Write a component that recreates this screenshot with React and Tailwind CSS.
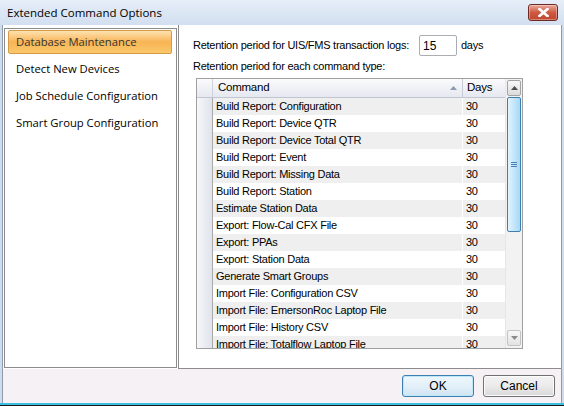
import React from "react";

const rows = [
  "Build Report: Configuration",
  "Build Report: Device QTR",
  "Build Report: Device Total QTR",
  "Build Report: Event",
  "Build Report: Missing Data",
  "Build Report: Station",
  "Estimate Station Data",
  "Export: Flow-Cal CFX File",
  "Export: PPAs",
  "Export: Station Data",
  "Generate Smart Groups",
  "Import File: Configuration CSV",
  "Import File: EmersonRoc Laptop File",
  "Import File: History CSV",
  "Import File: Totalflow Laptop File",
];

const menu = [
  "Database Maintenance",
  "Detect New Devices",
  "Job Schedule Configuration",
  "Smart Group Configuration",
];

const segoe = { fontFamily: '"Open Sans", "Noto Sans", sans-serif' };
const mss = { fontFamily: '"Liberation Sans", Arial, sans-serif' };

export default function App() {
  return (
    <div className="w-[564px] h-[406px] flex flex-col bg-[#cddcef] overflow-hidden">
      {/* title bar */}
      <div className="h-[25px] flex items-center justify-between pl-[7px] pr-[6px] bg-gradient-to-b from-[#e6eef8] to-[#d2dff0]">
        <span className="text-[11.5px] text-black" style={segoe}>
          Extended Command Options
        </span>
        <div className="w-[30px] h-[17px] rounded-[3px] border border-[#6d2a22] bg-gradient-to-b from-[#e9a99c] via-[#cf5a43] to-[#c0452e] flex items-center justify-center shadow-[inset_0_0_0_1px_rgba(255,255,255,0.35)]">
          <svg width="11" height="9" viewBox="0 0 11 9">
            <path d="M1.5 1 L9.5 8 M9.5 1 L1.5 8" stroke="#fff" strokeWidth="2.6" strokeLinecap="square" />
          </svg>
        </div>
      </div>

      {/* client */}
      <div className="flex-1 mx-[2px] border-x border-[#8f9aaa] flex flex-col bg-[#f5f1f4]">
        <div className="h-[344px] flex">
          {/* left list */}
          <div className="w-[175px] bg-white pt-[3px] pl-[1px] pr-[1px] pb-[1px]">
            <div className="h-full border border-[#8b8b8b] bg-white pt-[1px] pl-[3px] pr-[4px] flex flex-col gap-[3px]">
              {menu.map((m, i) => (
                <div
                  key={m}
                  className={
                    i === 0
                      ? "h-[24px] flex items-center pl-[7px] rounded-[2px] border border-[#d39a4a] bg-gradient-to-b from-[#fde2ae] via-[#f8b453] to-[#fbc96c] text-[11.25px] text-[#333] whitespace-nowrap"
                      : "h-[24px] flex items-center pl-[8px] text-[11.25px] text-black whitespace-nowrap"
                  }
                  style={segoe}
                >
                  {m}
                </div>
              ))}
            </div>
          </div>

          {/* right panel */}
          <div className="flex-1 bg-white border-l border-b border-[#8c8c8c] pl-[14px] pt-[10px] text-[11px] tracking-[-0.25px] text-black" style={mss}>
            <div className="flex items-center h-[21px] whitespace-nowrap">
              <span className="w-[226px]">Retention period for UIS/FMS transaction logs:</span>
              <div className="w-[38px] h-[21px] border border-[#abadb3] rounded-[2px] flex items-center pl-[3px] text-[12px] tracking-normal">15</div>
              <span className="ml-[4px]">days</span>
            </div>
            <div className="mt-[3px] h-[14px] flex items-center whitespace-nowrap">Retention period for each command type:</div>

            {/* grid */}
            <div className="ml-[3px] mt-[5px] w-[327px] h-[271px] border border-[#a0a0a0] flex overflow-hidden">
              <div className="w-[308px] flex flex-col overflow-hidden">
                <div className="h-[19px] shrink-0 flex bg-gradient-to-b from-[#fbfbfd] to-[#e6e8f0] border-b border-[#c2c6d2]">
                  <div className="w-[16px] border-r border-[#d0d3dc]" />
                  <div className="w-[250px] flex items-center justify-between pl-[5px] pr-[5px] border-r border-[#c8ccd6]">
                    <span className="text-[11.5px]">Command</span>
                    <svg width="7" height="4" viewBox="0 0 7 4">
                      <path d="M0 4 L3.5 0 L7 4 Z" fill="#8a9bb5" />
                    </svg>
                  </div>
                  <div className="w-[42px] flex items-center pl-[4px] text-[11.5px]">Days</div>
                </div>
                {rows.map((r, i) => (
                  <div key={r} className={"h-[17px] shrink-0 flex " + (i % 2 === 0 ? "bg-[#efefef]" : "bg-white")}>
                    <div className="w-[16px] shrink-0 bg-gradient-to-r from-[#f6f7fa] to-[#e1e3ec] border-r border-[#a9a9a9]" />
                    <div className="w-[250px] shrink-0 flex items-center pl-[3px] border-r border-white whitespace-nowrap overflow-hidden">
                      {r}
                    </div>
                    <div className="w-[42px] shrink-0 flex items-center pl-[3px]">30</div>
                  </div>
                ))}
              </div>

              {/* scrollbar */}
              <div className="w-[17px] flex flex-col bg-[#f2f2f2] border-l border-[#e6e6e6] px-[1px] py-[1px]">
                <div className="h-[16px] shrink-0 rounded-[2px] border border-[#a3a3a3] bg-gradient-to-b from-[#f8f8f8] to-[#dcdcdc] flex items-center justify-center">
                  <svg width="7" height="4" viewBox="0 0 7 4">
                    <path d="M0 4 L3.5 0 L7 4 Z" fill="#4d4d4d" />
                  </svg>
                </div>
                <div className="h-[135px] shrink-0 mt-[1px] rounded-[2px] border border-[#3c7fb1] bg-gradient-to-r from-[#e3f4fc] via-[#c4e6fa] to-[#a9d8f5] flex items-center justify-center">
                  <div className="flex flex-col gap-[1px]">
                    <div className="w-[6px] h-[1px] bg-[#4a7fb0]" />
                    <div className="w-[6px] h-[1px] bg-[#4a7fb0]" />
                    <div className="w-[6px] h-[1px] bg-[#4a7fb0]" />
                  </div>
                </div>
                <div className="flex-1" />
                <div className="h-[16px] shrink-0 mb-[1px] rounded-[2px] border border-[#c3c3c3] bg-gradient-to-b from-[#f8f8f8] to-[#e3e3e3] flex items-center justify-center">
                  <svg width="7" height="4" viewBox="0 0 7 4">
                    <path d="M0 0 L3.5 4 L7 0 Z" fill="#8a8a8a" />
                  </svg>
                </div>
              </div>
            </div>
          </div>
        </div>

        {/* buttons */}
        <div className="flex-1 flex justify-end items-start pt-[6px] pr-[6px] gap-[9px]" style={mss}>
          <button className="w-[72px] h-[22px] rounded-[3px] border border-[#3c7fb1] bg-gradient-to-b from-[#eef7fc] via-[#e3f0f9] to-[#cfe4f3] shadow-[inset_0_0_0_1px_#bde6fb] text-[12px] text-black">
            OK
          </button>
          <button className="w-[72px] h-[22px] rounded-[3px] border border-[#707070] bg-gradient-to-b from-[#f3f3f3] via-[#ebebeb] to-[#d8d8d8] shadow-[inset_0_0_0_1px_#fcfcfc] text-[12px] text-black">
            Cancel
          </button>
        </div>
      </div>
      <div className="h-[2px] bg-[#3bbfe0]" />
      <div className="h-[1px] bg-[#1a1a1a]" />
    </div>
  );
}
